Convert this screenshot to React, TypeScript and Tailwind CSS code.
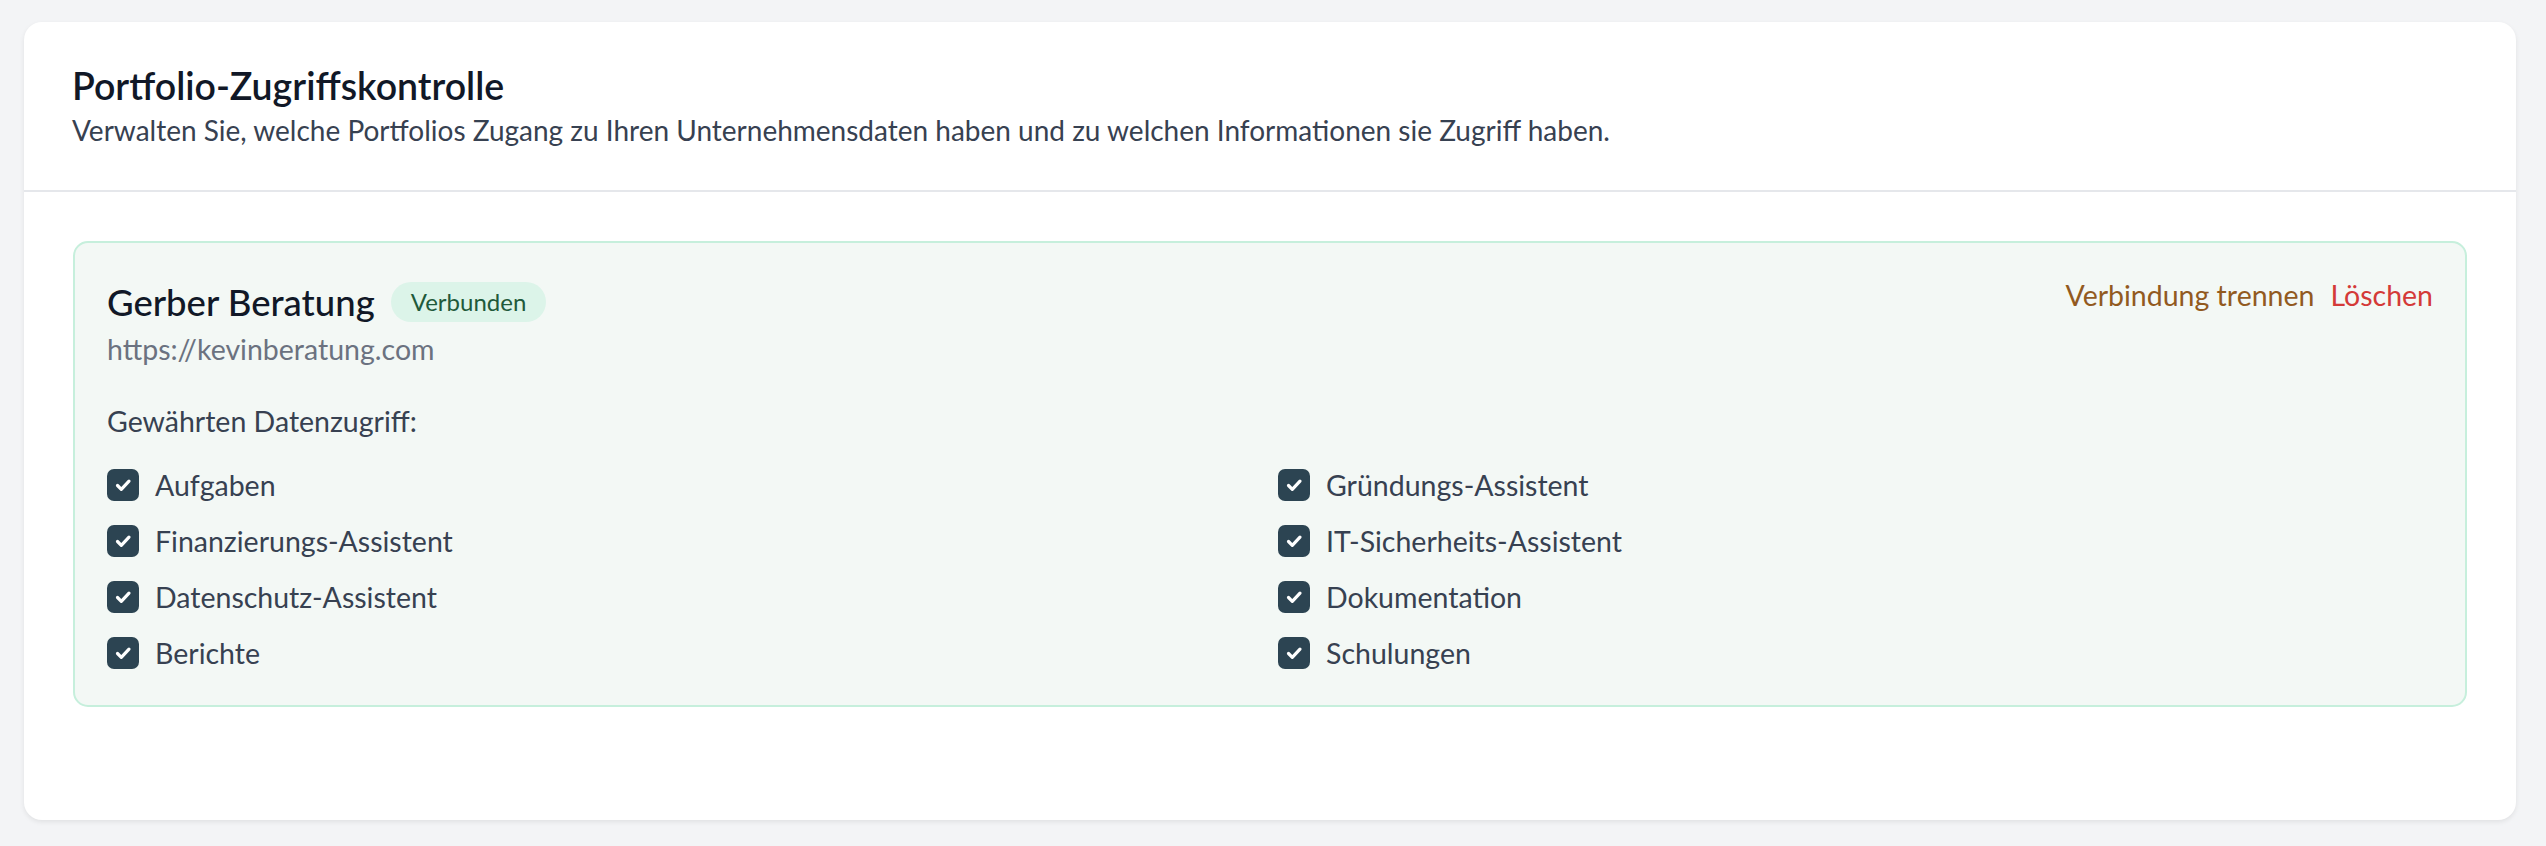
import React from "react";

const items = [
  "Aufgaben",
  "Gründungs-Assistent",
  "Finanzierungs-Assistent",
  "IT-Sicherheits-Assistent",
  "Datenschutz-Assistent",
  "Dokumentation",
  "Berichte",
  "Schulungen",
];

function CheckBox() {
  return (
    <span className="flex h-[32px] w-[32px] shrink-0 items-center justify-center rounded-[7px] bg-[#2c4452]">
      <svg width="32" height="32" viewBox="0 0 32 32" fill="none">
        <path
          d="M10.5 16.5 L14.3 20.3 L22 12.2"
          stroke="white"
          strokeWidth="3.2"
          strokeLinecap="round"
          strokeLinejoin="round"
        />
      </svg>
    </span>
  );
}

export default function App() {
  return (
    <div className="min-h-[846px] bg-[#f3f4f6] pl-[24px] pr-[30px] pt-[22px] pb-[26px] font-['Lato','Liberation_Sans',sans-serif]">
      <div className="rounded-[18px] bg-white shadow-[0_2px_5px_rgba(0,0,0,0.08)]">
        <div className="border-b-2 border-[#e5e7eb] px-[48px] pt-[44px] pb-[40px]">
          <h1 className="text-[37.5px] font-semibold leading-[40px] text-[#111827]">
            Portfolio-Zugriffskontrolle
          </h1>
          <p className="mt-[4px] text-[28px] leading-[40px] text-[#374151]">
            Verwalten Sie, welche Portfolios Zugang zu Ihren Unternehmensdaten haben und zu welchen Informationen sie Zugriff haben.
          </p>
        </div>
        <div className="px-[49px] pt-[49px] pb-[113px]">
          <div className="rounded-[15px] border-2 border-[#c6efdc] bg-[#f3f8f5] p-[32px]">
            <div className="flex items-start justify-between">
              <div>
                <div className="flex items-center gap-[16px]">
                  <span className="text-[36.5px] font-medium leading-[54px] text-[#111827]">
                    Gerber Beratung
                  </span>
                  <span className="rounded-full bg-[#dcf4e9] px-[20px] text-[24px] leading-[40px] text-[#1f5a3b]">
                    Verbunden
                  </span>
                </div>
                <div className="text-[28.5px] leading-[40px] text-[#6b7280]">
                  https://kevinberatung.com
                </div>
              </div>
              <div className="flex items-center gap-[16px] text-[28.5px] leading-[40px]">
                <button className="text-[#925a1f]">Verbindung trennen</button>
                <button className="text-[#d43a38]">Löschen</button>
              </div>
            </div>
            <div className="mt-[32px] text-[28.5px] leading-[40px] text-[#374151]">
              Gewährten Datenzugriff:
            </div>
            <div className="mt-[24px] grid grid-cols-2 gap-x-[16px] gap-y-[16px]">
              {items.map((it) => (
                <label key={it} className="flex h-[40px] items-center gap-[16px]">
                  <CheckBox />
                  <span className="text-[28.5px] leading-[40px] text-[#374151]">{it}</span>
                </label>
              ))}
            </div>
          </div>
        </div>
      </div>
    </div>
  );
}
